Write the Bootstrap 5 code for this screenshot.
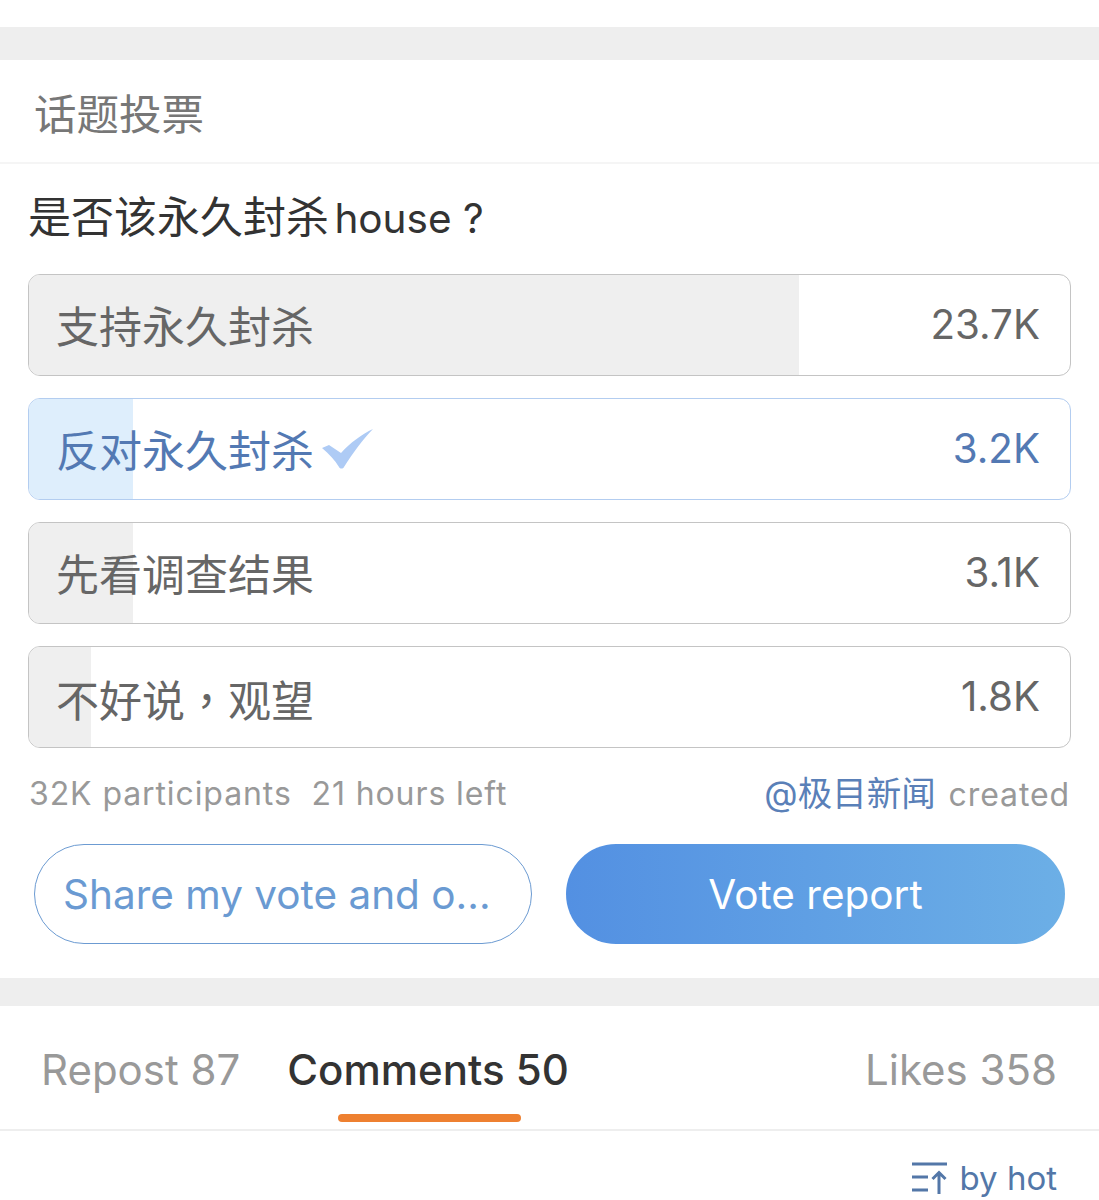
<!DOCTYPE html>
<html lang="zh-CN">
<head>
  <meta charset="UTF-8">
  <meta name="viewport" content="width=device-width, initial-scale=1.0">
  <title>话题投票</title>
  <link href="https://cdn.jsdelivr.net/npm/bootstrap@5.3.0/dist/css/bootstrap.min.css" rel="stylesheet">
  <style>
    body {
      background-color: #fff;
      font-family: Inter, "Noto Sans CJK SC", sans-serif;
      color: #333;
      height: 1200px;
      overflow: hidden;
    }
    .gap-band { background-color: #eeeeee; }
    .gap-top { height: 33px; margin-top: 27px; }
    .gap-mid { height: 28px; }
    .vote-head {
      height: 104px;
      padding: 30px 0 0 34px;
      font-size: 42.5px;
      line-height: 50px;
      color: #777;
      border-bottom: 2px solid #f5f5f5;
    }
    .vote-body { padding: 0 28px; }
    .vote-q {
      height: 110px;
      padding-top: 27px;
      font-size: 43px;
      line-height: 52px;
      color: #333;
    }
    .q-latin { font-size: 40.5px; word-spacing: 0; margin-left: -6px; }
    .vote-opts { gap: 22px; }
    .vote-opt {
      height: 102px;
      border: 1px solid #c4c4c4;
      border-radius: 12px;
      overflow: hidden;
      padding: 0 30px 0 27px;
      font-size: 43px;
      color: #666;
    }
    .vote-opt.picked { border-color: #b3cdf0; color: #5379b3; }
    .opt-fill { top: 0; bottom: 0; left: 0; background-color: #efefef; }
    .picked .opt-fill { background-color: #deeefc; }
    .opt-txt { z-index: 1; padding-top: 5px; }
    .opt-num { z-index: 1; font-size: 40.3px; }
    .opt-tick { margin: -6px 0 0 8px; }
    .cjk-tc { font-family: "Noto Sans CJK TC", sans-serif; }
    .vote-meta {
      height: 96px;
      padding: 26px 1px 0 1px;
      font-size: 32px;
      line-height: 40px;
      letter-spacing: .9px;
      color: #999;
    }
    .meta-link { color: #5a80b8; font-size: 34.500px; letter-spacing: 0; margin-right: 3px; }
    .vote-btns { padding: 0 6px; gap: 34px; margin-bottom: 34px; }
    .btn-pill {
      flex: 0 0 499px;
      height: 100px;
      border-radius: 50px;
      font-size: 40.5px;
      line-height: 96px;
      padding: 1px 0 0;
      white-space: nowrap;
    }
    .btn-share { flex-basis: 498px; border: 1.5px solid #6c9bd2; color: #6a9ad2; background: #fff; padding: 1px 28px 0; text-align: left; }
    .btn-report { background: linear-gradient(90deg, #5390e2, #6cafe6); color: #fff; border: 0; text-align: center; }
    .tab-row {
      height: 125px;
      padding: 37px 42px 0 41px;
      font-size: 42px;
      line-height: 54px;
      color: #999;
      border-bottom: 2px solid #eee;
    }
    .tab-on { color: #333; font-weight: 500; margin-left: 47px; }
    .tab-on i {
      left: 51px;
      width: 183px;
      height: 8px;
      bottom: 7px;
      background-color: #ee8030;
      border-radius: 4px;
    }
    .sort-row { padding: 27px 42px 0 0; font-size: 33px; line-height: 40px; color: #5377a8; gap: 13px; }
  </style>
</head>
<body>
  <div class="gap-band gap-top"></div>
  <div class="vote-head">话题投票</div>
  <div class="vote-body">
    <div class="vote-q">是否该永久封杀<span class="q-latin"> house ?</span></div>
    <div class="vote-opts d-flex flex-column">
      <div class="vote-opt position-relative d-flex justify-content-between align-items-center">
        <div class="opt-fill position-absolute" style="width: 74%"></div>
        <span class="opt-txt position-relative">支持永久封杀</span>
        <span class="opt-num position-relative">23.7K</span>
      </div>
      <div class="vote-opt picked position-relative d-flex justify-content-between align-items-center">
        <div class="opt-fill position-absolute" style="width: 10%"></div>
        <span class="opt-txt position-relative d-flex align-items-center">反对永久封杀
          <svg class="opt-tick" width="52" height="42" viewBox="0 0 52 42" fill="#aecbf5"><path d="M0 20 L7 17 L19 25 C28 15 40 6 51 1 C41 11 31 25 22 39 C21 41 18 41 17 39 C13 32 7 26 0 20 Z"/></svg>
        </span>
        <span class="opt-num position-relative">3.2K</span>
      </div>
      <div class="vote-opt position-relative d-flex justify-content-between align-items-center">
        <div class="opt-fill position-absolute" style="width: 10%"></div>
        <span class="opt-txt position-relative">先看调查结果</span>
        <span class="opt-num position-relative">3.1K</span>
      </div>
      <div class="vote-opt position-relative d-flex justify-content-between align-items-center">
        <div class="opt-fill position-absolute" style="width: 6%"></div>
        <span class="opt-txt position-relative">不好说<span class="cjk-tc" lang="zh-TW">，</span>观望</span>
        <span class="opt-num position-relative">1.8K</span>
      </div>
    </div>
    <div class="vote-meta d-flex justify-content-between">
      <span>32K participants&nbsp; 21 hours left</span>
      <span><span class="meta-link">@极目新闻</span>&nbsp;created</span>
    </div>
    <div class="vote-btns d-flex">
      <button type="button" class="btn btn-pill btn-share">Share my vote and o...</button>
      <button type="button" class="btn btn-pill btn-report">Vote report</button>
    </div>
  </div>
  <div class="gap-band gap-mid"></div>
  <div class="tab-row d-flex">
    <span>Repost 87</span>
    <span class="tab-on position-relative">Comments 50<i class="position-absolute"></i></span>
    <span class="ms-auto">Likes 358</span>
  </div>
  <div class="sort-row d-flex justify-content-end align-items-center">
    <svg width="35" height="32" viewBox="0 0 35 32" fill="none" stroke="#5377a8" stroke-width="3"><path d="M0 2 H35 M0 15 H16 M0 28 H16 M27 32 V11 M20.500 17 L27 10.500 L33.500 17"/></svg>
    <span>by hot</span>
  </div>
  <script src="https://cdn.jsdelivr.net/npm/bootstrap@5.3.0/dist/js/bootstrap.bundle.min.js"></script>
</body>
</html>
